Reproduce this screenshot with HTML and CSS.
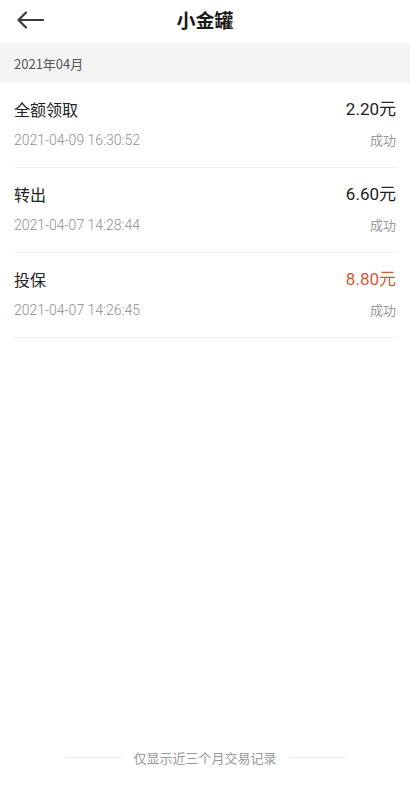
FILE: index.html
```html
<!DOCTYPE html>
<html lang="zh-CN">
<head>
<meta charset="UTF-8" />
<meta name="viewport" content="width=device-width, initial-scale=1" />
<title>小金罐</title>
<link rel="stylesheet" href="styles.css">
</head>
<body>

<header class="topbar">
  <button class="back" aria-label="返回">
    <svg width="28" height="18" viewBox="0 0 28 18" fill="none" stroke="#3a3b48" stroke-width="2.2" stroke-linecap="round" stroke-linejoin="round">
      <path d="M27 9H3M10 1.5L2.5 9L10 16.5"/>
    </svg>
  </button>
  <h1>小金罐</h1>
</header>

<div class="month">2021年04月</div>

<ul class="records">
  <li class="record">
    <div class="line">
      <span class="name">全额领取</span>
      <span class="amount">2.20元</span>
    </div>
    <div class="line sub">
      <span class="time">2021-04-09 16:30:52</span>
      <span>成功</span>
    </div>
  </li>
  <li class="record">
    <div class="line">
      <span class="name">转出</span>
      <span class="amount">6.60元</span>
    </div>
    <div class="line sub">
      <span class="time">2021-04-07 14:28:44</span>
      <span>成功</span>
    </div>
  </li>
  <li class="record">
    <div class="line">
      <span class="name">投保</span>
      <span class="amount red">8.80元</span>
    </div>
    <div class="line sub">
      <span class="time">2021-04-07 14:26:45</span>
      <span>成功</span>
    </div>
  </li>
</ul>

<footer class="tip">
  <span class="rule"></span>
  <span>仅显示近三个月交易记录</span>
  <span class="rule"></span>
</footer>

</body>
</html>
```

FILE: styles.css
```css
body {
  margin: 0; background: #fff; color: #222;
  font-family: "Noto Sans CJK SC", "Liberation Sans", sans-serif;
  height: 800px; display: flex; flex-direction: column;
}
.topbar { height: 43px; display: flex; align-items: center; justify-content: center; position: relative; }
.topbar h1 { margin: 0 0 4px; font-size: 19px; font-weight: bold; color: #1a1a1a; }
.back {
  position: absolute; left: 16px; top: 11px; background: none; border: none;
  padding: 0; cursor: pointer; line-height: 0;
}
.month {
  background: #f4f4f4; height: 40px; line-height: 42px; padding-left: 14px;
  font-size: 13px; color: #555;
}
.records { list-style: none; margin: 0; padding: 0 14px; }
.record { border-bottom: 1px solid #f0f0f0; height: 85px; box-sizing: border-box; padding-top: 12px; }
.line { display: flex; justify-content: space-between; align-items: center; }
.name { font-size: 16px; color: #222; line-height: 28px; }
.amount { font-size: 17px; color: #222; font-family: "Roboto", "Noto Sans CJK SC", sans-serif; line-height: 28px; }
.amount.red { color: #d05a37; }
.sub { font-size: 13px; color: #9a9a9a; margin-top: 6px; line-height: 22px; }
.time { font-family: "Roboto", sans-serif; font-size: 14px; font-weight: 300; color: #8f8f8f; }
.tip {
  margin-top: auto; margin-bottom: 33px; display: flex; align-items: center; justify-content: center;
  gap: 12px; font-size: 13px; color: #999;
}
.rule { width: 56px; height: 1px; background: #f0f0f0; }
```
